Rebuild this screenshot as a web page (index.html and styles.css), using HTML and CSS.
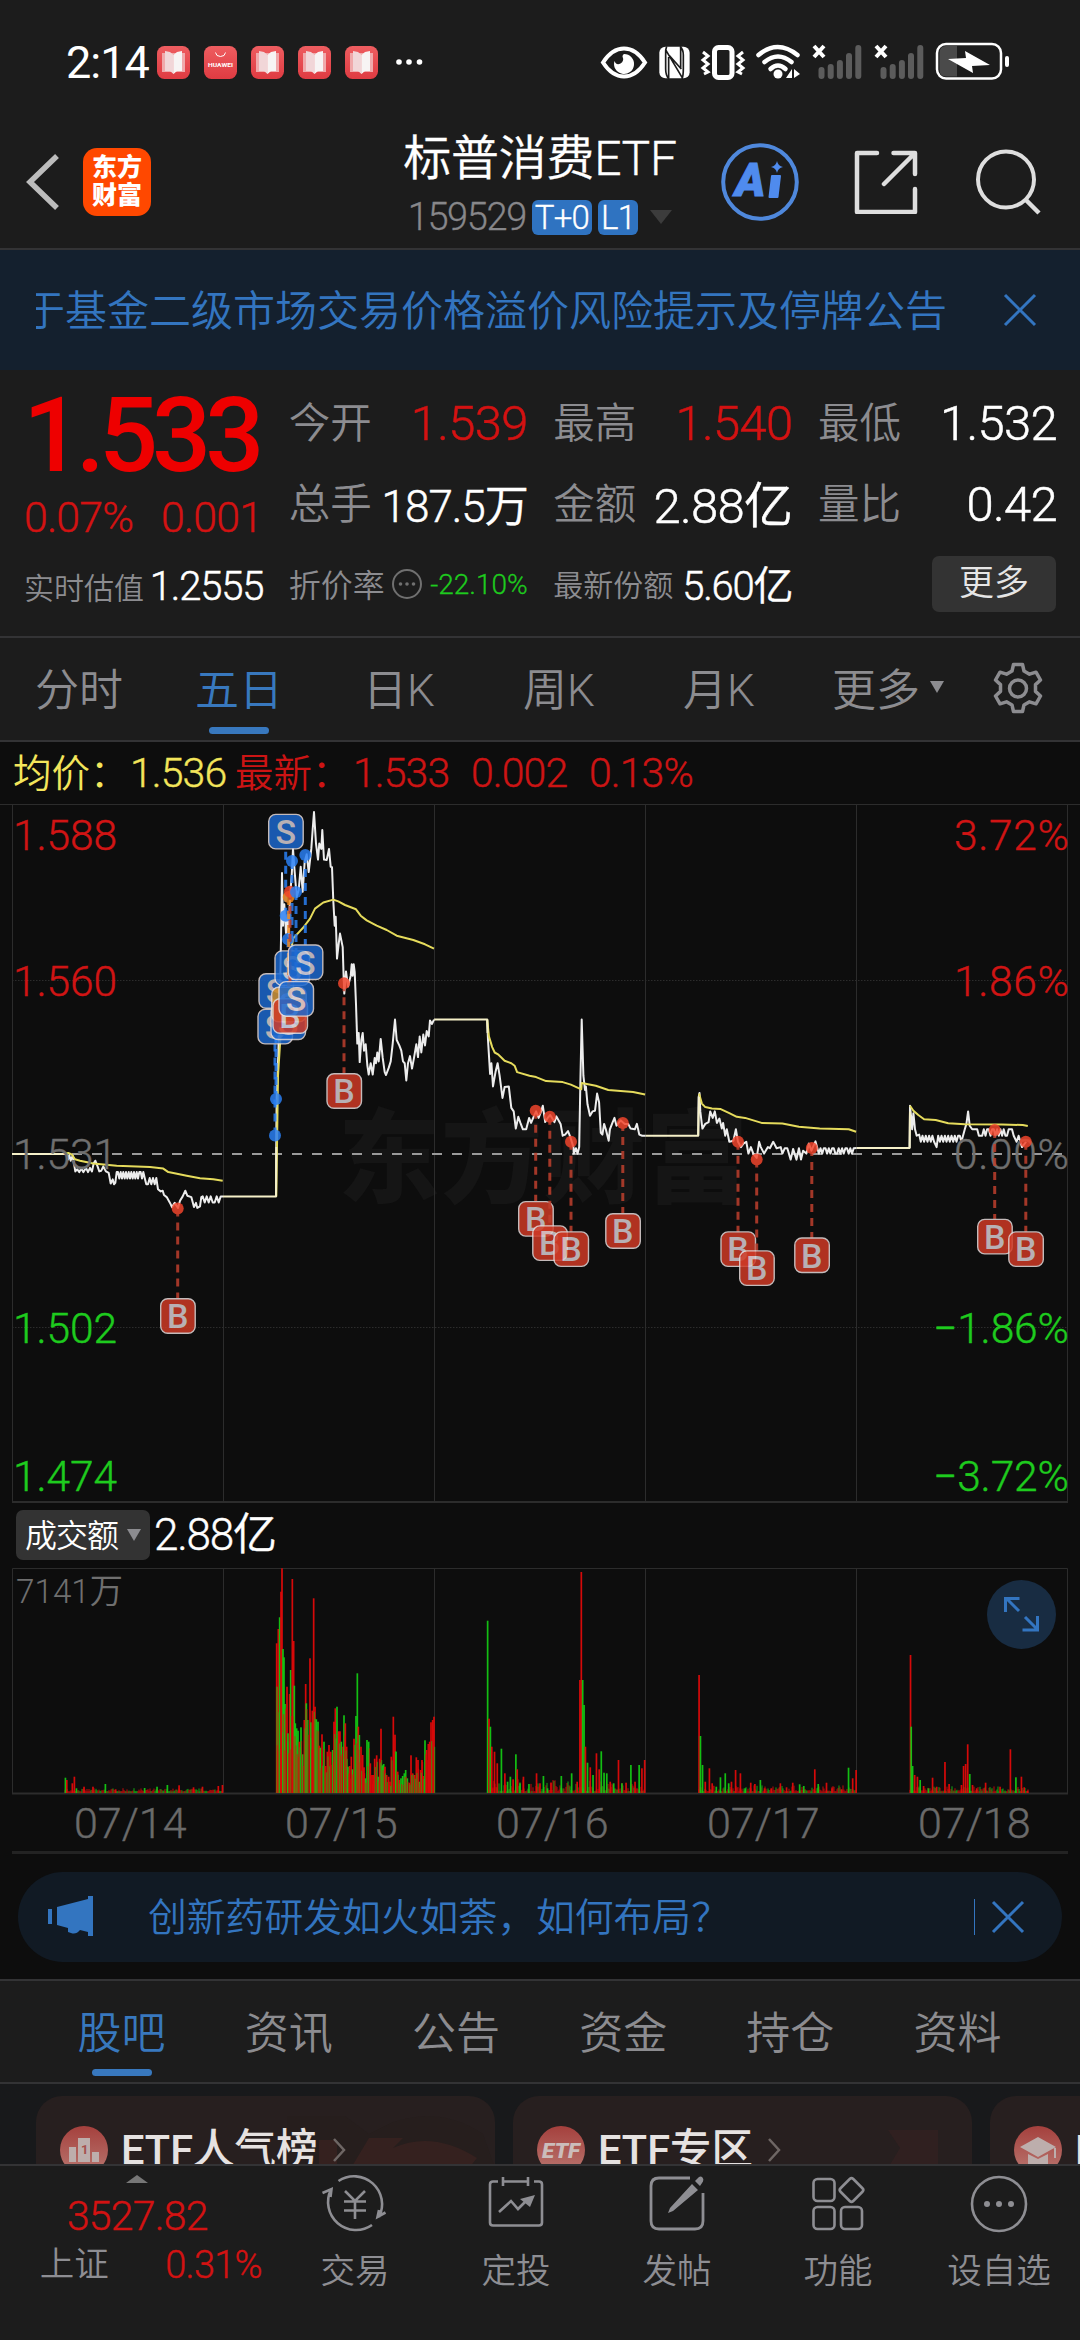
FILE: index.html
```html
<!DOCTYPE html>
<html lang="zh-CN">
<head>
<meta charset="utf-8">
<title>标普消费ETF 159529</title>
<link rel="stylesheet" href="styles.css">
</head>
<body>
<svg width="0" height="0" class="defs">
  <defs>
    <linearGradient id="app" x1="0" y1="0" x2="0" y2="1"><stop offset="0" stop-color="#ee5d60"/><stop offset="1" stop-color="#df3b42"/></linearGradient>
    <linearGradient id="badge" x1="0" y1="0" x2="0" y2="1"><stop offset="0" stop-color="#a5403d"/><stop offset="1" stop-color="#b97770"/></linearGradient>
    <symbol id="book" viewBox="0 0 33 33">
      <rect width="33" height="33" rx="7.5" fill="url(#app)"/>
      <path d="M5 7h23v19h-10l-1.500 2-1.500-2H5z" fill="#f0a9ab"/>
      <path d="M8 5l5 1 3.500 3v19l-3.500-3H8z" fill="#f1d6d8"/>
      <path d="M25 5l-5 1-3.500 3v19l3.500-3h5z" fill="#f7f4f4"/>
    </symbol>
    <symbol id="signal" viewBox="0 0 52 36">
      <path d="M3 3l10 11M13 3L3 14" stroke="#fff" stroke-width="4"/>
      <path d="M10.500 27v6M19.700 24v9M28.900 20v13M38 13v20M47.300 5v28" stroke="#5c5c5c" stroke-width="6" stroke-linecap="round"/>
    </symbol>
  </defs>
</svg>
<div class="phone">
  <div class="status">
    <span class="clock">2:14</span>
    <div class="apps">
      <svg><use href="#book"/></svg>
      <svg viewBox="0 0 33 33"><rect width="33" height="33" rx="7.500" fill="url(#app)"/><path d="M11.500 6.500q.5 4 5 4t5-4" fill="none" stroke="#fff"/><text x="4" y="21" font-size="5.500" font-weight="700" fill="#fff" textLength="25" lengthAdjust="spacingAndGlyphs">HUAWEI</text></svg>
      <svg><use href="#book"/></svg>
      <svg><use href="#book"/></svg>
      <svg><use href="#book"/></svg>
    </div>
    <svg class="dots" width="28" height="8"><g fill="#fff"><circle cx="4" cy="4" r="2.800"/><circle cx="14" cy="4" r="2.800"/><circle cx="24.500" cy="4" r="2.800"/></g></svg>
    <svg class="sys" width="410" height="40" viewBox="600 41 410 40">
      <path d="M603 61.500q9-14 21-14t21 14q-9 14-21 14t-21-14z" fill="none" stroke="#fff" stroke-width="4"/>
      <path d="M624 53a10 10 0 1 1-9.500 7q2 5 6 2.500t2-7q0-2 1.500-2.500z" fill="#fff"/>
      <g transform="translate(580 20) scale(.3333)"><rect x="238" y="77" width="91" height="95" rx="18" fill="#fff"/><path d="M260 76q-4 9-3 26v42q0 20 10 30M300 76q10 9 10 26v42q0 20-4 30M258 88l50 84M266 172v-64M302 76v64M268 104l36 40" fill="none" stroke="#1c1c1c" stroke-width="5"/></g>
      <rect x="714.500" y="46.500" width="17.500" height="30" rx="4" fill="none" stroke="#fff" stroke-width="5"/>
      <path d="M703 51l5 4-5 4 5 4-5 4 5 4-4 2M743 51l-5 4 5 4-5 4 5 4-5 4 4 2" stroke="#fff" stroke-width="3" fill="none"/>
      <g fill="none" stroke="#fff" stroke-width="4.500" stroke-linecap="round"><path d="M758.500 54q19-16 39 0"/><path d="M764.500 61q13.500-11 27 0"/><path d="M770.500 68q7.500-7 15 0"/></g>
      <circle cx="778" cy="73" r="4.500" fill="#fff"/>
      <path d="M792 68v9h-6zM794 77v-9l6 5z" fill="#fff"/>
      <use href="#signal" x="811" y="42" width="52" height="36"/>
      <use href="#signal" x="873" y="42" width="52" height="36"/>
      <rect x="937" y="43" width="64" height="34.500" rx="9" fill="none" stroke="#fff" stroke-width="2.500"/>
      <path d="M946 45h11v30.500h-11q-6.500 0-6.500-7V52q0-7 6.500-7z" fill="#4a4a4a"/>
      <path d="M948 58l18-1-1-7 25 14-18 1 1 7z" fill="#fff"/>
      <rect x="1005" y="55" width="4" height="11" rx="2" fill="#fff"/>
    </svg>
  </div>

  <header class="head">
    <svg class="back" width="36" height="58" viewBox="0 0 36 58"><path d="M33 3L6 29l27 26" fill="none" stroke="#bcbcbc" stroke-width="5.500"/></svg>
    <div class="logo"><span>东方</span><span>财富</span></div>
    <div class="title">
      <h1>标普消费ETF</h1>
      <div class="sub"><span>159529</span><b>T+0</b><b>L1</b><i class="tri"></i></div>
    </div>
    <svg class="ai" width="78" height="78" viewBox="0 0 78 78"><circle cx="39" cy="39" r="36.800" fill="none" stroke="#4f88dc" stroke-width="4"/><text x="14" y="53" class="ai-a">A</text><path d="M51 33h8l-2.500 21h-8z" fill="#4f8bee" stroke="#4f8bee" stroke-width="2" stroke-linejoin="round"/><path d="M56 18q1 5 6 6-5 1-6 6-1-5-6-6 5-1 6-6z" fill="#4f8bee"/></svg>
    <svg class="share" width="64" height="64" viewBox="0 0 64 64"><path d="M23 3H3v59h58V39M39.500 3H61v21M59 5L30 34" fill="none" stroke="#dedede" stroke-width="4.500" stroke-linecap="round" stroke-linejoin="round"/></svg>
    <svg class="search" width="66" height="66" viewBox="0 0 66 66"><circle cx="30" cy="30.500" r="28" fill="none" stroke="#dedede" stroke-width="4"/><path d="M49 50l14 14" stroke="#dedede" stroke-width="4.500"/></svg>
  </header>

  <div class="notice">
    <div class="notice-text"><span>于基金二级市场交易价格溢价风险提示及停牌公告</span></div>
    <svg width="34" height="34" viewBox="0 0 34 34"><path d="M2 2l30 30M32 2L2 32" stroke="#3375c0" stroke-width="3"/></svg>
  </div>

  <section class="quote">
    <div class="col first">
      <div class="price">1.533</div>
      <div class="row chg red"><span>0.07%</span><span>0.001</span></div>
      <div class="row r3"><label>实时估值</label><em class="sm">1.2555</em></div>
    </div>
    <div class="col">
      <div class="row r1"><label>今开</label><em class="red">1.539</em></div>
      <div class="row r2"><label>总手</label><em class="mid">187.5万</em></div>
      <div class="row r3"><label class="l32">折价率</label><svg width="32" height="32" viewBox="0 0 32 32"><g fill="#707070"><circle cx="16" cy="16" r="14" fill="none" stroke="#707070" stroke-width="2"/><circle cx="9.500" cy="16" r="1.800"/><circle cx="16" cy="16" r="1.800"/><circle cx="22.500" cy="16" r="1.800"/></g></svg><em class="grn">-22.10%</em></div>
    </div>
    <div class="col">
      <div class="row r1"><label>最高</label><em class="red">1.540</em></div>
      <div class="row r2"><label>金额</label><em class="up">2.88亿</em></div>
      <div class="row r3"><label>最新份额</label><em class="sm">5.60亿</em></div>
    </div>
    <div class="col">
      <div class="row r1"><label>最低</label><em>1.532</em></div>
      <div class="row r2"><label>量比</label><em>0.42</em></div>
      <div class="row r3 right"><button>更多</button></div>
    </div>
  </section>

  <nav class="periods">
    <span>分时</span><span class="on">五日</span><span>日K</span><span>周K</span><span>月K</span>
    <span class="more">更多<i></i></span>
    <svg width="54" height="54" viewBox="0 0 54 54"><path d="M22.500 2.500h9l1.500 6.500 5.500 3.200 6.500-2 4.500 7.800-5 4.600v6.800l5 4.600-4.500 7.800-6.500-2-5.500 3.200-1.500 6.500h-9L21 43l-5.500-3.200-6.500 2-4.500-7.800 5-4.600v-6.800l-5-4.600L9 10.200l6.500 2L21 9z" fill="none" stroke="#8c8c90" stroke-width="3.500" stroke-linejoin="round"/><circle cx="27" cy="26.500" r="8.500" fill="none" stroke="#8c8c90" stroke-width="3.500"/></svg>
  </nav>

  <div class="legend"><span class="y">均价：</span><span class="y v">1.536</span><span>最新：</span><span class="v">1.533</span><span class="v">0.002</span><span class="v">0.13%</span></div>

  <svg class="chart" width="1080" height="699" viewBox="0 804 1080 699">
    <text class="mark" x="338" y="1195" textLength="410">东方财富</text>
    <g class="grid"><path d="M0 804.500H1080M12.500 805V1502M223.500 805V1502M434.500 805V1502M645.500 805V1502M856.500 805V1502M1067.500 805V1502"/><path d="M12 980.500H1068M12 1327.500H1068" stroke-dasharray="1.500 1.500"/><path d="M12 1502H1068" stroke-width="2"/></g>
    <path d="M12 1154H1068" stroke="#9a9a9a" stroke-width="2" stroke-dasharray="10 10"/>
    <g id="lines"></g>
    <g class="axis">
      <g fill="#d01414" stroke="#d01414"><text x="13" y="850" textLength="104">1.588</text><text x="13" y="996" textLength="104">1.560</text><text x="954" y="850" textLength="115">3.72%</text><text x="954" y="996" textLength="115">1.86%</text></g>
      <g fill="#6f6f6f" stroke="#6f6f6f"><text x="13" y="1169" textLength="104">1.531</text><text x="954" y="1169" textLength="115">0.00%</text></g>
      <g fill="#1ecb1e" stroke="#1ecb1e"><text x="13" y="1343" textLength="104">1.502</text><text x="13" y="1491" textLength="104">1.474</text><text x="933" y="1343" textLength="136">−1.86%</text><text x="933" y="1491" textLength="136">−3.72%</text></g>
    </g>
    <g id="marks"></g>
  </svg>

  <div class="volhead"><span class="chip">成交额<i></i></span><span class="vv">2.88亿</span></div>

  <div class="volume">
    <svg width="1080" height="228" viewBox="0 1567 1080 228">
      <g class="grid"><path d="M12.500 1793V1568.500H1067.500V1793M223.500 1568V1793M434.500 1568V1793M645.500 1568V1793M856.500 1568V1793"/><path d="M12 1793.500H1068" stroke-width="2"/></g>
      <g id="bars"></g>
      <text x="16" y="1603" class="max" textLength="107" lengthAdjust="spacingAndGlyphs">7141万</text>
      <circle cx="1021.500" cy="1614.500" r="34.500" fill="#182c42"/>
      <path d="M1019 1611l-13-13M1005.500 1612v-13.500h14M1025 1617l13 13M1037.500 1616v14h-15" stroke="#3375c0" stroke-width="3" fill="none"/>
    </svg>
    <div class="dates"><span>07/14</span><span>07/15</span><span>07/16</span><span>07/17</span><span>07/18</span></div>
  </div>

  <div class="promo">
    <svg width="46" height="42" viewBox="0 0 46 42"><path d="M0 13h4v15H0zM9 11L40 3V0h5v40h-5v-4l-8-2q-4 5-9 3l-3-1v-4L9 29z" fill="#3375c0"/></svg>
    <span>创新药研发如火如荼，如何布局？</span>
    <i></i>
    <svg width="34" height="34" viewBox="0 0 34 34"><path d="M2 2l30 30M32 2L2 32" stroke="#3375c0" stroke-width="3"/></svg>
  </div>

  <nav class="sections"><span class="on">股吧</span><span>资讯</span><span>公告</span><span>资金</span><span>持仓</span><span>资料</span></nav>

  <div class="cards">
    <div class="card">
      <svg width="48" height="48" viewBox="0 0 48 48"><circle cx="24" cy="24" r="24" fill="url(#badge)"/><path d="M9 21h7v15H9zM18 12h12v24H18zM32 26h7v10h-7z" fill="#bdaeac"/><text x="21" y="28" font-size="13" font-weight="700" fill="#a5504c">1</text></svg>
      <b>ETF人气榜</b>
      <svg class="go" width="14" height="24"><path d="M2 1l10 11L2 23" fill="none" stroke="#6e6664" stroke-width="2.500"/></svg>
      <svg class="deco" width="260" height="72" viewBox="0 0 260 72"><path d="M52 20h58l24 18 24-12q50-16 90 12l12 34H70V40H52z" fill="#261e1d"/><path d="M84 44h18v28H84zM116 72l18-30h34l-10 10q40-18 84 10l-8 10z" fill="#35211f"/></svg>
    </div>
    <div class="card">
      <svg width="48" height="48" viewBox="0 0 48 48"><circle cx="24" cy="24" r="24" fill="url(#badge)"/><text x="5" y="32" font-size="21" font-weight="900" font-style="italic" fill="#cbbdbb" textLength="38" lengthAdjust="spacingAndGlyphs">ETF</text></svg>
      <b>ETF专区</b>
      <svg class="go" width="14" height="24"><path d="M2 1l10 11L2 23" fill="none" stroke="#6e6664" stroke-width="2.500"/></svg>
      <svg class="deco" width="260" height="72" viewBox="0 0 260 72"><path d="M176 34h50v38h-50l12-20z" fill="#302020"/></svg>
    </div>
    <div class="card">
      <svg width="48" height="48" viewBox="0 0 48 48"><circle cx="24" cy="24" r="24" fill="url(#badge)"/><path d="M6 21l18-10 18 10-18 10zM14 28l10 5 10-5v10q-10 6-20 0zM40 22h2v10h-2z" fill="#bdaeac"/></svg>
      <b>ETF学堂</b>
    </div>
  </div>

  <footer class="dock">
    <div class="index"><i></i><div class="pt">3527.82</div><div class="nm"><span>上证</span><em>0.31%</em></div></div>
    <div class="item"><svg viewBox="0 0 64 60"><g fill="none" stroke="#8e8e93" stroke-width="2.600"><path d="M15.500 7A28 28 0 0 1 56 43M49 51A28 28 0 0 1 8 15.500M-.5 19l9-4-1 8M56 36l-1.500 7 8-4.500"/><path d="M22 17l10 10 10-10M21 27.500h22M21 36.500h22M32 27v18"/></g></svg><span>交易</span></div>
    <div class="item"><svg viewBox="0 0 64 60"><g fill="none" stroke="#8e8e93" stroke-width="2.600"><path d="M14 7.500H9q-3 0-3 3v38q0 3 3 3h46q3 0 3-3v-38q0-3-3-3h-5M19 3v9M44 3v9M19 7.500h25"/><path d="M15 38l12-11 7 8 8-8"/></g><path d="M36 25l15-4-5 12z" fill="#8e8e93"/></svg><span>定投</span></div>
    <div class="item"><svg viewBox="0 0 64 60"><path d="M45 4H14q-8 0-8 8v35q0 8 8 8h36q8 0 8-8V19" fill="none" stroke="#8e8e93" stroke-width="2.800"/><path d="M47 10l6 6-25 21-5 2 2-5zM50 7l4-4q2-1 3.500.5t.5 4L55 12z" fill="#8e8e93"/></svg><span>发帖</span></div>
    <div class="item"><svg viewBox="0 0 64 60"><g fill="none" stroke="#8e8e93" stroke-width="2.600"><rect x="7.500" y="5" width="21" height="22" rx="4"/><rect x="7.500" y="33" width="21" height="22" rx="4"/><rect x="35" y="33" width="21" height="22" rx="4"/><rect x="36.500" y="7" width="18" height="18" rx="2.500" transform="rotate(45 45.500 16)"/></g></svg><span>功能</span></div>
    <div class="item"><svg viewBox="0 0 64 60"><circle cx="32" cy="30" r="27" fill="none" stroke="#8e8e93" stroke-width="2.600"/><g fill="#8e8e93"><circle cx="20" cy="30" r="3"/><circle cx="32" cy="30" r="3"/><circle cx="44" cy="30" r="3"/></g></svg><span>设自选</span></div>
  </footer>
</div>
<script src="chart.js"></script>
</body>
</html>
```

FILE: styles.css
```css
* { box-sizing: border-box; }
body { margin: 0; background: #1c1c1c; font-family: Roboto, "Noto Sans CJK SC", sans-serif; font-weight: 350; }
svg { display: block; flex: none; }
i, em { font-style: normal; }
.defs { position: absolute; }
.phone { width: 1080px; height: 2340px; overflow: hidden; display: flex; flex-direction: column; background: #1c1c1c; }
.phone > * { flex: none; }
.red { color: #d31212; }

.status { height: 105px; display: flex; align-items: center; padding: 19px 0 0 66px; }
.clock { width: 91px; font-size: 45px; font-weight: 400; color: #fff; letter-spacing: -1px; }
.apps { display: flex; gap: 14px; }
.apps svg { width: 33px; height: 33px; }
.dots { margin-left: 17px; }
.sys { margin-left: 177px; }

.head { height: 145px; display: flex; align-items: center; border-bottom: 2px solid #333335; padding-top: 11px; }
.back { margin-left: 24px; }
.logo { margin-left: 23px; width: 68px; height: 68px; border-radius: 14px; background: #ff4800; color: #fff; font-size: 25px; line-height: 28px; font-weight: 800; display: flex; flex-direction: column; align-items: center; justify-content: center; }
.title { width: 390px; margin-left: 194px; height: 134px; display: flex; flex-direction: column; align-items: center; }
.title h1 { margin: 12px 0 0; font-size: 48px; line-height: 64px; font-weight: 350; color: #fff; letter-spacing: -.3px; -webkit-text-stroke: .3px; }
.sub { display: flex; align-items: center; font-size: 38px; line-height: 36px; color: #87878a; margin-top: 8px; gap: 6px; -webkit-text-stroke: .3px; }
.sub span { letter-spacing: -1.400px; }
.sub b { background: #2f73c1; color: #fff; font-weight: 350; font-size: 33px; line-height: 35px; border-radius: 6px; padding: 0 3px; letter-spacing: -.8px; }
.tri { border: 11px solid transparent; border-top: 14px solid #3c3c3c; border-bottom: 0; margin-left: 6px; }
.ai { margin-left: -14px; }
.ai-a { font-size: 46px; font-weight: 900; font-style: italic; fill: #4f8bee; stroke: #4f8bee; }
.share { margin-left: 55px; }
.search { margin-left: 58px; }

.notice { height: 120px; background: #14202e; display: flex; align-items: center; padding-left: 36px; }
.notice-text { width: 911px; overflow: hidden; display: flex; justify-content: flex-end; white-space: nowrap; font-size: 42px; color: #3375c0; margin-top: -6px; }
.notice > svg { margin-left: 56px; }

.quote { height: 268px; display: grid; grid-template-columns: repeat(4, 1fr); column-gap: 26.500px; padding: 0 24px 0 24px; border-bottom: 2px solid #333335; }
.col { min-width: 0; display: flex; flex-direction: column; white-space: nowrap; }
.row { display: flex; align-items: center; justify-content: space-between; }
.row label { font-size: 41.500px; color: #8c8c90; margin-top: -7px; }
.row em { color: #fff; font-size: 49px; letter-spacing: -.7px; margin-right: -1px; -webkit-text-stroke: .5px; }
.row em.red { color: #d31212; }
.row em.mid { font-size: 44px; letter-spacing: -1px; margin-top: -3px; }
.row em.up { margin-top: -6px; }
.r1 { height: 81px; margin-top: 13px; }
.r2 { height: 80px; }
.r3 { height: 80px; }
.r3 label { font-size: 30px; margin-top: -3px; }
.r3 label.l32 { font-size: 32px; }
.row em.sm { font-size: 40px; letter-spacing: -1.200px; margin-top: -2px; }
.row em.grn { font-size: 28px; letter-spacing: 0; color: #1ecb1e; -webkit-text-stroke: .3px; }
.right { justify-content: flex-end; }
.right button { width: 124px; height: 56px; border: 0; border-radius: 7px; background: #333; color: #e6e6e6; font: inherit; font-size: 35px; line-height: 48px; padding: 0; }
.price { height: 101px; margin-top: 14px; font-size: 104px; font-weight: 500; line-height: 104px; color: #ee0000; letter-spacing: -6px; text-indent: -1px; }
.chg { height: 64px; font-size: 43px; letter-spacing: -.9px; -webkit-text-stroke: .4px; }
.first .r3 { height: 76px; }

.periods { height: 104px; display: grid; grid-template-columns: repeat(5, 160px) 178px 82px; margin-left: -1px; border-bottom: 2px solid #333335; align-items: center; justify-items: center; font-size: 44px; color: #8c8c90; }
.periods span, .sections span { height: 100%; display: flex; align-items: center; padding-bottom: 4px; }
.on { color: #3878be; position: relative; }
.on::after { content: ""; position: absolute; left: 50%; margin-left: -30px; bottom: 6px; width: 60px; height: 7px; border-radius: 4px; background: #3878be; }
.more i { border: 7px solid transparent; border-top: 12px solid #8c8c90; border-bottom: 0; margin-left: 10px; }

.legend { height: 62px; background: #0d0d0d; padding-left: 13px; display: grid; grid-template-columns: 117px 105px 118px 118px 118px 130px; align-items: center; font-size: 38.500px; color: #cc1414; white-space: nowrap; }
.legend span { margin-top: -6px; }
.legend .v { font-size: 41px; letter-spacing: -.9px; margin-top: 0; -webkit-text-stroke: .4px; }
.legend .y { color: #f3e55b; }

.chart { background: #0d0d0d; }
.grid { fill: none; stroke: #2c2c2c; }
.mark { font-size: 102px; font-weight: 900; fill: #151515; }
.axis { font-size: 42.500px; stroke-width: .4px; }
.max { font-size: 34px; fill: #6f6f6f; }

.volhead { height: 64px; background: #0d0d0d; display: flex; align-items: center; padding-left: 16px; gap: 4px; font-size: 44px; color: #fff; letter-spacing: -1.200px; }
.vv { margin-top: -8px; -webkit-text-stroke: .4px; }
.chip { width: 134px; height: 50px; border-radius: 7px; background: #333; font-size: 32px; letter-spacing: -1px; display: flex; align-items: center; justify-content: space-between; padding: 0 9px 5px 9px; }
.chip i { border: 7px solid transparent; border-top: 12px solid #8c8c90; border-bottom: 0; margin-top: 4px; }
.volume { height: 288px; background: #0d0d0d; }
.dates { display: grid; grid-template-columns: repeat(5, 211px); margin: 0 12px; padding-left: 62px; height: 59px; border-bottom: 3px solid #232323; align-items: center; font-size: 43px; color: #6a6a6a; -webkit-text-stroke: .4px; }
.dates span { line-height: 56px; margin-top: -1px; }

.promo { height: 124px; background: #0d0d0d; display: flex; align-items: center; padding-left: 48px; position: relative; z-index: 0; color: #3375c0; font-size: 38.800px; }
.promo::before { content: ""; position: absolute; z-index: -1; left: 18px; right: 18px; top: 17px; height: 90px; border-radius: 45px; background: #111a24; }
.promo span { margin: -7px 0 0 54px; width: 826px; }
.promo i { width: 1px; height: 36px; background: #3375c0; margin-right: 16px; }

.sections { height: 105px; border: solid #333335; border-width: 2px 0; display: grid; grid-template-columns: repeat(6, 167.200px); padding-left: 38px; justify-items: center; font-size: 44px; color: #8c8c90; }

.cards { height: 80px; background: #18191b; display: flex; gap: 18px; padding: 12px 0 0 36px; overflow: hidden; }
.card { flex: none; width: 459px; height: 110px; border-radius: 26px; background: #271f1f; overflow: hidden; display: flex; align-items: flex-start; padding: 30px 0 0 24px; position: relative; }
.card b { margin: -1px 0 0 13px; font-size: 41.500px; line-height: 50px; font-weight: 500; color: #e6e2e1; position: relative; z-index: 1; white-space: nowrap; }
.go { margin: 12px 0 0 14px; position: relative; z-index: 1; }
.deco { position: absolute; right: 0; top: 0; }

.dock { flex: 1 !important; background: #1c1c1c; border-top: 2px solid #333335; display: grid; grid-template-columns: 274.500px repeat(5, 161px); }
.index { display: flex; flex-direction: column; align-items: center; color: #d31212; padding-top: 9px; }
.index > i { border: 11px solid transparent; border-bottom: 8px solid #777; border-top: 0; }
.pt { font-size: 41px; line-height: 50px; margin-top: 8px; letter-spacing: -.8px; -webkit-text-stroke: .4px; }
.nm { display: flex; align-items: center; width: 222px; justify-content: space-between; font-size: 34.500px; line-height: 48px; color: #8e8e93; margin-left: 27px; }
.nm span { margin-top: -3px; }
.nm em { font-size: 38px; color: #d31212; letter-spacing: -.8px; -webkit-text-stroke: .4px; }
.item { display: flex; flex-direction: column; align-items: center; padding-top: 8px; font-size: 34.500px; color: #8e8e93; }
.item svg { width: 64px; height: 60px; overflow: visible; }
.item span { line-height: 50px; margin-top: 12px; }
```

FILE: chart.js
```js
const NS = 'http://www.w3.org/2000/svg';
function add(parent, tag, attrs, text) {
  const el = document.createElementNS(NS, tag);
  for (const k in attrs) el.setAttribute(k, attrs[k]);
  if (text) el.textContent = text;
  parent.appendChild(el);
  return el;
}

let seed = 7;
const rnd = () => (seed = (seed * 16807) % 2147483647) / 2147483647;

// Sideways stretch of ticks between two price levels
function zig(x0, x1, a, b, step) {
  let s = '', up = true;
  for (let x = x0; x < x1; x += step) {
    s += ` ${x},${up ? a : b}`;
    if (rnd() > 0.2) up = !up;
  }
  return s;
}

const LEFT = (x, y) => [x / 3, 790 + y / 2.8];
const RIGHT = (x, y) => [430 + x / 2.4123, 790 + y / 2.8];
const lines = document.getElementById('lines');
function line(map, pts, color) {
  const p = pts.trim().split(/\s+/).map(s => map(...s.split(',').map(Number)).map(v => v.toFixed(1)).join(',')).join(' ');
  add(lines, 'polyline', { points: p, fill: 'none', stroke: color, 'stroke-width': 2, 'stroke-linejoin': 'round' });
}
const W = '#ededed', Y = '#e5db5c', P = '#f5f0c8';

line(LEFT, '195,1018 200,1020 204,1035 208,1022 212,1038 218,1024 226,1068 232,1062 238,1070 244,1060 250,1070 258,1058 264,1070 270,1058 276,1068 281,1045 286,1038 292,1052 298,1068 304,1066 310,1054 318,1068 326,1072 332,1102 338,1090 342,1104 346,1100' + zig(350, 432, 1070, 1088, 4) + zig(434, 470, 1086, 1104, 5) + ' 474,1118 482,1124 488,1122 492,1134 500,1140 510,1156 516,1168 524,1156 534,1170 540,1150 548,1138 556,1122 562,1136 574,1140 582,1168 588,1156 592,1170 600,1166 604,1140' + zig(608, 666, 1138, 1155, 6) + ' 669,1138', W);
line(LEFT, '828,1138 829,966 830,860 833,790 836,700 840,560 843,420 846,232 849,380 853,320 858,400 862,350 866,410 870,300 875,240 879,165 884,230 890,300 896,280 902,215 908,285 914,200 920,180 926,230 934,165 938,110 942,62 948,150 954,195 958,150 964,165 967,112 972,195 980,196 987,165 992,215 996,216 1000,310 1004,380 1007,355 1011,472 1016,430 1020,402 1028,440 1031,530 1033,570 1038,508 1044,550 1052,520 1055,488 1058,520 1061,488 1064,510 1068,600 1072,710 1076,680 1079,762 1084,700 1088,680 1092,730 1097,712 1102,770 1106,797 1112,765 1118,797 1124,750 1128,765 1132,735 1136,760 1142,697 1148,750 1154,790 1158,798 1166,778 1172,760 1178,710 1185,643 1190,700 1198,715 1204,730 1209,760 1214,765 1219,813 1224,765 1230,745 1236,780 1242,750 1249,712 1254,748 1259,690 1264,735 1270,685 1275,715 1280,675 1286,690 1290,645 1296,655 1302,643', W);
line(LEFT, '195,1018 205,1016 215,1020 225,1034 240,1038 280,1046 350,1052 450,1056 490,1060 505,1070 520,1072 560,1080 600,1087 640,1090 668,1094', Y);
line(LEFT, '829,1138 834,800 841,700 850,560 868,470 880,415 895,400 910,385 930,360 945,332 970,315 1000,307 1015,312 1035,322 1068,334 1082,352 1100,365 1130,380 1160,392 1190,408 1240,420 1275,432 1302,444', Y);
line(LEFT, '36,1019 195,1019', P);
line(LEFT, '669,1138 828,1138 829,1000', P);

line(RIGHT, '138,643 140,700 145,795 148,765 152,830 158,790 163,765 168,800 175,862 180,832 190,830 196,890 202,900 207,948 213,915 218,932 224,950 232,950 236,932 239,918 244,932 250,915 256,900 262,918 268,900 272,884 278,930 284,918 290,910 300,930 305,914 315,935 320,968 326,965 333,955 338,970 346,1000 347,1018 352,1003 356,1018 360,1000 363,800 366,643 370,800 374,840 376,830 380,880 386,912 392,900 398,898 403,850 408,875 412,960 416,965 420,935 424,950 431,982 434,950 440,932 445,918 450,940 460,925 470,935 478,935 484,948 494,950 499,935 505,965 512,968 520,968', W);
line(RIGHT, '647,968 648,860 650,848 652,900 657,948 664,935 672,930 676,900 682,918 687,900 692,932 698,920 704,948 707,932 712,968 716,950 722,985 732,982 738,950 743,985 750,1000 756,990 763,985 768,1018 774,1000 780,1018 788,1030 794,985 798,1000 806,1018 815,1000 820,1003 828,985 836,1003 846,1000 850,1018 856,1003 862,1003 870,1035 876,1005 884,1035 890,1003 895,1035 900,1010 908,1018 914,990 920,1010 930,984' + zig(938, 1024, 1018, 1003, 4) + ' 1029,1002', W);
line(RIGHT, '1157,1002 1158,884 1161,920 1163,950 1166,905 1170,950 1174,968 1180,965' + zig(1184, 1218, 985, 968, 4) + ' 1222,1000' + zig(1226, 1284, 968, 985, 4) + ' 1290,950 1294,935 1298,900 1302,940 1308,950 1316,950' + zig(1320, 1412, 950, 968, 4) + ' 1415,985 1420,968 1428,1000 1438,985', W);
line(RIGHT, '138,643 142,690 150,720 156,735 164,740 180,758 196,765 204,772 210,790 240,800 256,804 280,815 320,818 340,825 365,838 366,820 400,828 430,840 490,846 519,853', Y);
line(RIGHT, '649,850 656,878 664,888 680,892 700,893 722,905 740,915 760,918 800,932 850,934 890,943 940,948 1010,950 1028,957', Y);
line(RIGHT, '1158,884 1166,898 1178,910 1192,922 1220,924 1250,933 1290,936 1380,937 1430,938 1442,941', Y);
line(RIGHT, '10,643 138,643 139,680', P);
line(RIGHT, '520,968 647,968 649,860', P);
line(RIGHT, '1029,1002 1157,1002 1158,900', P);

// Trades: [side, x, dot y, label y]
const marks = document.getElementById('marks');
const C = { B: '#d03a26', S: '#1c68cf', O: '#d08a20' };
const D = { B: '#f2452c', S: '#2a80f5', O: '#f58a1c' };
[['B', 177.7, 1208.6, 1315.7],
 ['S', 275, 1135.4, 1026.4], ['S', 276, 1098.9, 990.7], ['S', 285.7, 915.7, 831.4], ['S', 288, 939.3, 1022],
 ['S', 292, 861, 967.9], ['O', 288.7, 897, 1004.3], ['B', 290, 891.8, 1015.7], ['S', 296, 892, 998.6], ['S', 305.3, 855, 962],
 ['B', 344, 983.2, 1090.7], ['B', 535.7, 1110.7, 1218.6], ['B', 549.8, 1116.8, 1242.9], ['B', 571, 1141.8, 1248.9],
 ['B', 622.8, 1122.9, 1230.7], ['B', 738, 1141.8, 1248.9], ['B', 756.7, 1159.6, 1267.9], ['B', 811.8, 1147.9, 1255],
 ['B', 994.7, 1130, 1236.4], ['B', 1025.8, 1141.8, 1248.9]
].forEach(([t, x, dy, ly]) => {
  const g = add(marks, 'g', { opacity: 0.84 });
  const end = ly > dy ? ly - 17 : ly + 17;
  add(g, 'path', { d: `M${x} ${dy}V${end}`, stroke: t === 'B' ? '#c0402e' : D[t], 'stroke-width': 3, 'stroke-dasharray': '8 6' });
  add(g, 'circle', { cx: x, cy: dy, r: 6, fill: D[t] });
  add(g, 'rect', { x: x - 17, y: ly - 17, width: 34.5, height: 34.5, rx: 7, fill: C[t], stroke: '#e6dcdc', 'stroke-width': 1.4 });
  add(g, 'text', { x, y: ly + 12.5, 'font-size': 34, 'font-weight': 500, fill: '#d9d0d4', 'text-anchor': 'middle' }, t === 'O' ? 'S' : t);
});

// Turnover bars: "x,top,colour"
const bars = document.getElementById('bars');
const BASE = 1793, col = { r: '#e00a0a', g: '#14c814' };
function bar(x, y, c, w, o) {
  add(bars, 'rect', { x: (x - w / 2).toFixed(2), y: y.toFixed(1), width: w, height: (BASE - y).toFixed(1), fill: col[c], 'fill-opacity': o });
}
function ticks(x0, x1, h) {
  for (let x = x0; x < x1; x += 1) {
    const v = Math.pow(rnd(), 2.5) * h + 1.8;
    bar(x, BASE - v, rnd() > 0.35 ? 'r' : 'g', 1, 0.85);
  }
}
function keys(map, s) {
  s.split(' ').forEach(k => {
    const m = k.match(/(\d+),(\d+)([rg])/);
    const [x, y] = map(+m[1], +m[2]);
    bar(x, y, m[3], 1.7, 0.95);
  });
}
const WIDE = (x, y) => [x / 1.4519, 1480 + y / 3];
const DAY2 = (x, y) => [250 + x / 3, 1560 + y / 3];

ticks(65, 223, 3);
keys(WIDE, '95,893g 97,900r 105,910r 108,890r 111,925g 122,920r 135,920r 153,912g 168,928r 210,924g 228,920g 243,915g 260,916r 281,922r 294,920r 317,918r 323,915r');
const d2 = '80,250r 82,380g 85,207r 89,172g 93,95r 96,25r 99,267g 102,292g 105,432g 111,380r 114,520g 119,402r 122,330g 127,57r 131,243r 133,377g 136,490g 140,505g 144,512g 148,545r 153,502g 158,583g 163,480r 167,372r 169,430g 173,480g 180,295r 183,487g 187,452r 191,115r 195,440r 199,478g 204,485g 208,557r 211,563g 216,523r 222,545g 227,618r 232,575r 237,555r 242,575r 248,570g 252,485r 256,445r 261,440g 266,514r 270,514r 274,545g 279,560r 282,466g 286,490r 290,560r 294,620g 299,618r 304,590r 308,628g 312,536r 318,468g 322,340g 325,500r 328,525g 333,560r 338,585r 342,622r 346,655g 351,540g 356,545g 361,610r 366,645r 370,645r 374,596r 380,586r 385,650g 389,596r 393,506r 397,616g 401,612g 405,620r 410,645r 416,650r 420,665r 424,590r 430,470r 435,524r 438,575g 443,635r 448,660r 453,655g 458,648g 463,640g 467,630g 472,655g 478,668r 483,586r 488,640r 494,645r 499,592r 504,600r 508,665g 512,630r 516,600r 520,648r 525,541g 530,570r 535,552r 539,545r 543,487r 548,480r 552,470r';
keys(DAY2, d2);
d2.split(' ').forEach(k => {
  const m = k.match(/(\d+),(\d+)([rg])/);
  const top = Math.max(+m[2], 420);
  const h = (698 - top) * (0.45 + rnd() * 0.5);
  const [x, y] = DAY2(+m[1] + 2, 698 - h);
  bar(x, y, m[3] === 'r' ? (rnd() > 0.45 ? 'g' : 'r') : 'r', 1.1, 0.62);
});
ticks(488, 645, 12);
keys(WIDE, '708,422g 710,716r 712,740g 714,800r 718,815r 722,850r 728,806g 733,880r 737,905g 741,890g 745,898r 749,823g 751,868r 755,910g 760,890r 768,912g 779,880r 784,910r 789,888g 795,925g 800,908r 815,888g 830,880g 838,905r 842,600r 844,276r 846,600g 848,675g 850,800r 853,848g 857,862r 861,885g 866,820r 870,868r 873,814g 877,878g 881,880g 886,905r 891,910g 898,840r 903,910g 909,908r 916,855g 922,905r 928,855g 932,865r 936,840r');
ticks(699, 856, 6);
keys(WIDE, '1015,585r 1017,768g 1020,855g 1024,905r 1030,865r 1034,910r 1040,920g 1046,892g 1053,880g 1058,910g 1062,905r 1068,870r 1075,880r 1082,925g 1090,908r 1096,912r 1104,900g 1110,925r 1120,925r 1133,910r 1142,922r 1151,908r 1161,913g 1167,918g 1183,868r 1188,912g 1200,908r 1208,925r 1222,928r 1232,863g 1238,895r 1243,870r');
ticks(910, 1029, 5);
keys(WIDE, '1322,525r 1323,740g 1325,858g 1328,885r 1332,890r 1336,900g 1341,918r 1348,925g 1354,893r 1360,920r 1372,846r 1378,912r 1396,915r 1399,858r 1402,852r 1405,793r 1408,882g 1412,915r 1418,925r 1431,908r 1452,920r 1467,808r 1475,892g 1483,890r 1487,922r 1492,932r');
```
